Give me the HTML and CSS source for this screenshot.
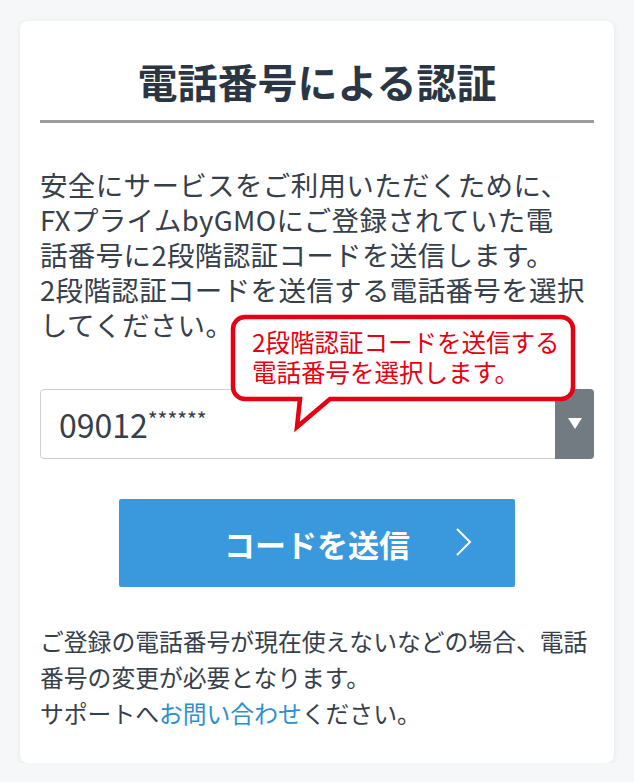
FILE: index.html
```html
<!DOCTYPE html>
<html lang="ja">
<head>
<meta charset="utf-8">
<title>電話番号による認証</title>
<link rel="stylesheet" href="styles.css">
</head>
<body>
<main class="card">
  <h1 class="title">電話番号による認証</h1>
  <p class="lead">安全にサービスをご利用いただくために、
FXプライムbyGMOにご登録されていた電
話番号に2段階認証コードを送信します。
2段階認証コードを送信する電話番号を選択
してください。</p>
  <div class="select">
    <span class="select-value">09012<span class="mask">******</span></span>
    <span class="select-arrow">
      <svg width="14" height="12" viewBox="0 0 14 12"><path d="M0 0 H14 L7 11 Z" fill="#fff"/></svg>
    </span>
  </div>
  <div class="btn-row">
    <button class="btn" type="button">コードを送信
      <svg class="chev" width="18" height="30" viewBox="0 0 18 30"><path d="M2 2 L15 15 L2 28" fill="none" stroke="#fff" stroke-width="2"/></svg>
    </button>
  </div>
  <p class="note">ご登録の電話番号が現在使えないなどの場合、電話番号の変更が必要となります。<br>サポートへ<a href="#" class="link">お問い合わせ</a>ください。</p>

  <div class="callout">
    <svg class="callout-shape" width="350" height="120" viewBox="0 0 350 120">
      <path d="M17 5 H333 A12 12 0 0 1 345 17 V75 A12 12 0 0 1 333 87 H102 L69 115 L72 87 H17 A12 12 0 0 1 5 75 V17 A12 12 0 0 1 17 5 Z" fill="#fff" stroke="#e60012" stroke-width="4.5" stroke-linejoin="miter"/>
    </svg>
    <div class="callout-text">2段階認証コードを送信する
電話番号を選択します。</div>
  </div>
</main>
</body>
</html>
```
FILE: styles.css
```css
* { box-sizing: border-box; }
html, body {
  margin: 0;
  padding: 0;
  background: #f6f7f9;
}
body {
  font-family: "Noto Sans CJK JP", "Noto Sans", sans-serif;
  color: #36404a;
  padding: 21px 20px 0 20px;
}
.card {
  position: relative;
  width: 594px;
  background: #fff;
  border-radius: 8px;
  box-shadow: 0 1px 6px rgba(0, 0, 0, 0.08);
  padding: 35px 20px 32px 20px;
}
.title {
  margin: 0;
  font-size: 40px;
  line-height: 50px;
  font-weight: 700;
  color: #2a3644;
  text-align: center;
  padding-bottom: 14px;
  border-bottom: 3px solid #9c9c9c;
}
.lead {
  margin: 44px 0 0 0;
  font-size: 27.5px;
  line-height: 35px;
  letter-spacing: 0.35px;
  white-space: pre;
}
.select {
  margin-top: 47px;
  height: 70px;
  border: 1px solid #cfcfcf;
  border-radius: 4px;
  display: flex;
  align-items: stretch;
}
.select-value {
  flex: 1;
  display: flex;
  align-items: center;
  padding-left: 18px;
  font-size: 32px;
  color: #36404a;
}
.mask {
  font-size: 21px;
  position: relative;
  top: -5px;
}
.select-arrow {
  width: 39px;
  margin: -1px -1px -1px 0;
  background: #737b82;
  border-radius: 0 4px 4px 0;
  display: flex;
  align-items: center;
  justify-content: center;
}
.btn-row {
  margin-top: 40px;
  display: flex;
  justify-content: center;
}
.btn {
  position: relative;
  width: 396px;
  height: 88px;
  border: none;
  border-radius: 2px;
  background: #3a99dc;
  color: #fff;
  font-family: "Noto Sans CJK JP", "Noto Sans", sans-serif;
  font-size: 31px;
  font-weight: 700;
  padding: 0;
}
.chev {
  position: absolute;
  right: 42px;
  top: 28px;
}
.note {
  margin: 36px 0 0 0;
  font-size: 23.8px;
  line-height: 36px;
}
.link {
  color: #2d8fd0;
  text-decoration: none;
}
.callout {
  position: absolute;
  left: 208px;
  top: 291px;
  width: 350px;
  height: 120px;
}
.callout-shape {
  position: absolute;
  left: 0;
  top: 0;
}
.callout-text {
  position: absolute;
  left: 24px;
  top: 15px;
  font-size: 24.5px;
  line-height: 30px;
  color: #e60012;
  white-space: pre;
}
```
